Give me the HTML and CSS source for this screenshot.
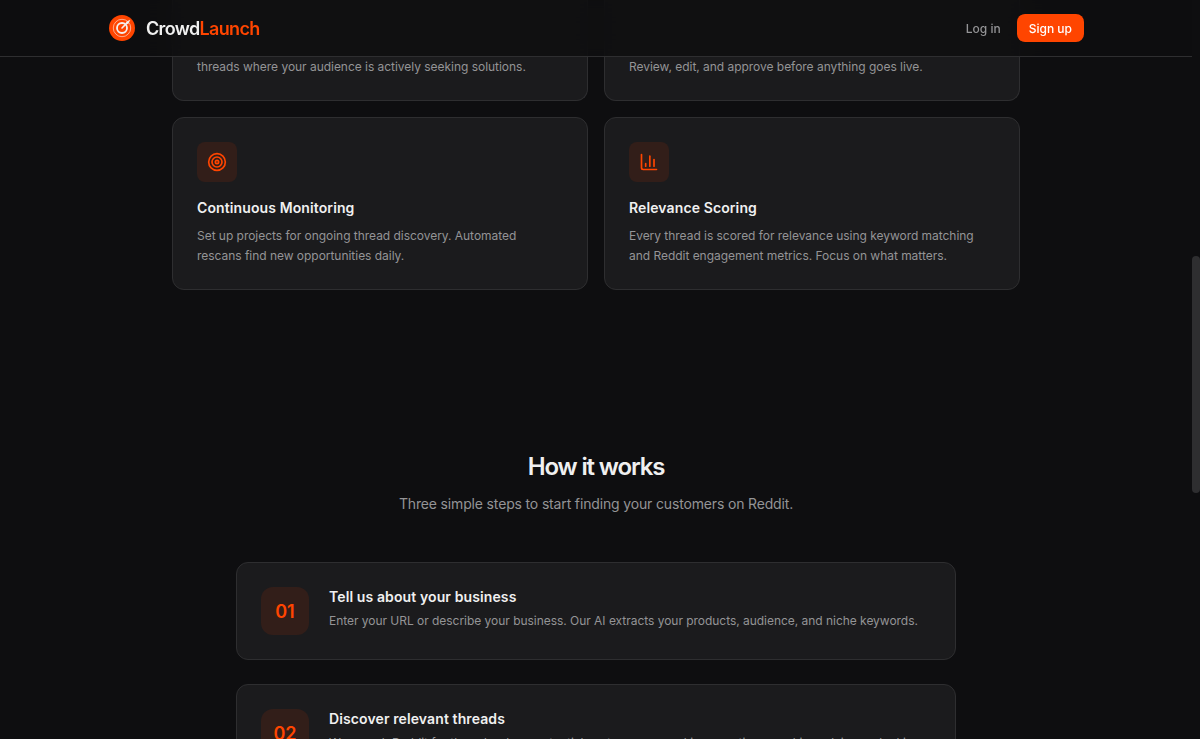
FILE: index.html
```html
<!DOCTYPE html>
<html lang="en">
<head>
  <meta charset="UTF-8">
  <meta name="viewport" content="width=device-width, initial-scale=1.0">
  <title>CrowdLaunch</title>
  <link rel="stylesheet" href="styles.css">
</head>
<body>
  <header class="site-header">
    <div class="nav">
      <a class="brand" href="#">
        <svg class="logo" viewBox="0 0 28 28" fill="none">
          <circle cx="14" cy="14" r="13" fill="#ff4500"/>
          <circle cx="14" cy="14" r="8.7" stroke="#fff" stroke-opacity=".55" stroke-width="1"/>
          <circle cx="14" cy="14" r="5" stroke="#f4f0ee" stroke-width="1.8"/>
          <path d="M14 14l5.5-5.5" stroke="#f4f0ee" stroke-width="1.6" stroke-linecap="round"/>
          <path d="M18 8.3l3.8-2.1-2 3.9z" fill="#f4f0ee" stroke="#f4f0ee" stroke-width=".6"/>
        </svg>
        <span class="brand-name">Crowd<span class="accent">Launch</span></span>
      </a>
      <nav class="nav-links">
        <a class="login" href="#">Log in</a>
        <a class="signup" href="#">Sign up</a>
      </nav>
    </div>
  </header>

  <main class="page">
    <section class="features">
      <div class="card card-cut">
        <p>threads where your audience is actively seeking solutions.</p>
      </div>
      <div class="card card-cut">
        <p>Review, edit, and approve before anything goes live.</p>
      </div>
      <div class="card">
        <div class="icon">
          <svg viewBox="0 0 24 24">
            <circle cx="12" cy="12" r="10"/>
            <circle cx="12" cy="12" r="6"/>
            <circle cx="12" cy="12" r="2"/>
          </svg>
        </div>
        <h3>Continuous Monitoring</h3>
        <p>Set up projects for ongoing thread discovery. Automated<br>rescans find new opportunities daily.</p>
      </div>
      <div class="card">
        <div class="icon">
          <svg viewBox="0 0 24 24">
            <path d="M3 3v16a2 2 0 0 0 2 2h16"/>
            <path d="M18 17V9"/>
            <path d="M13 17V5"/>
            <path d="M8 17v-3"/>
          </svg>
        </div>
        <h3>Relevance Scoring</h3>
        <p>Every thread is scored for relevance using keyword matching<br>and Reddit engagement metrics. Focus on what matters.</p>
      </div>
    </section>

    <section class="steps">
      <h2>How it works</h2>
      <p class="lead">Three simple steps to start finding your customers on Reddit.</p>
      <div class="step">
        <div class="number">01</div>
        <div class="step-text">
          <h3>Tell us about your business</h3>
          <p>Enter your URL or describe your business. Our AI extracts your products, audience, and niche keywords.</p>
        </div>
      </div>
      <div class="step">
        <div class="number">02</div>
        <div class="step-text">
          <h3>Discover relevant threads</h3>
          <p>We search Reddit for threads where potential customers are asking questions, seeking advice, or looking</p>
        </div>
      </div>
    </section>
  </main>
  <div class="scroll-thumb"></div>
</body>
</html>
```

FILE: styles.css
```css
* {
  box-sizing: border-box;
  margin: 0;
  padding: 0;
}

body {
  height: 739px;
  overflow: hidden;
  padding-right: 8px;
  background: #0e0e10;
  color: #f0f0f0;
  font-family: Inter, "Liberation Sans", sans-serif;
}

a {
  color: inherit;
  text-decoration: none;
}

.accent {
  color: #ff4500;
}

/* Header */
.site-header {
  position: fixed;
  top: 0;
  left: 0;
  right: 8px;
  z-index: 1;
  height: 57px;
  background: rgba(14, 14, 15, 0.8);
  backdrop-filter: blur(12px);
  border-bottom: 1px solid #2e2e30;
}

.nav {
  display: flex;
  align-items: center;
  justify-content: space-between;
  max-width: 1024px;
  height: 56px;
  margin: 0 auto;
  padding: 0 24px;
}

.brand {
  display: flex;
  align-items: center;
  gap: 10px;
}

.logo {
  width: 28px;
  height: 28px;
}

.brand-name {
  font-size: 18px;
  font-weight: 620;
  letter-spacing: -0.66px;
}

.nav-links {
  display: flex;
  align-items: center;
  gap: 16px;
  font-size: 12px;
}

.login {
  color: #949496;
  font-weight: 500;
}

.signup {
  height: 28px;
  padding: 0 12px;
  border-radius: 8px;
  background: #ff4500;
  color: #fff;
  font-weight: 500;
  line-height: 29px;
}

/* Feature cards */
.features {
  display: grid;
  grid-template-columns: 1fr 1fr;
  gap: 16px;
  max-width: 896px;
  margin: 0 auto;
  padding: 0 24px;
}

.card {
  height: 173px;
  padding: 24px;
  background: #1b1b1d;
  border: 1px solid #2e2e30;
  border-radius: 12px;
}

.card-cut {
  height: 101px;
  padding-top: 57px;
  border-top: 0;
  border-radius: 0 0 12px 12px;
}

.card p,
.step p {
  color: #949496;
  font-size: 12px;
  line-height: 20px;
  letter-spacing: -0.032px;
}

.icon {
  display: flex;
  align-items: center;
  justify-content: center;
  width: 40px;
  height: 40px;
  margin-bottom: 16px;
  border-radius: 8px;
  background: #321e19;
}

.icon svg {
  width: 20px;
  height: 20px;
  fill: none;
  stroke: #ff4500;
  stroke-width: 2;
  stroke-linecap: round;
  stroke-linejoin: round;
}

h3 {
  font-size: 14px;
  font-weight: 600;
  line-height: 20px;
  letter-spacing: 0.11px;
}

.card h3 {
  margin-bottom: 8px;
}

/* How it works */
.steps {
  max-width: 768px;
  margin: 0 auto;
  padding: 161px 24px 0;
}

h2 {
  margin-bottom: 11px;
  font-size: 24px;
  font-weight: 620;
  line-height: 32px;
  letter-spacing: -1.15px;
  text-align: center;
}

.lead {
  margin-bottom: 48px;
  color: #949496;
  font-size: 14px;
  line-height: 20px;
  letter-spacing: -0.155px;
  text-align: center;
}

.step {
  display: flex;
  gap: 20px;
  height: 98px;
  margin-bottom: 24px;
  padding: 24px;
  background: #1b1b1d;
  border: 1px solid #2e2e30;
  border-radius: 12px;
}

.number {
  width: 48px;
  height: 48px;
  flex-shrink: 0;
  border-radius: 12px;
  background: #321e19;
  color: #ff4500;
  font-size: 18px;
  font-weight: 600;
  line-height: 50px;
  text-align: center;
}

.step h3 {
  margin-bottom: 4px;
}

.step p {
  white-space: nowrap;
}

.scroll-thumb {
  position: fixed;
  top: 256px;
  right: 0;
  width: 8px;
  height: 237px;
  border-radius: 4px;
  background: #2e2e30;
}
```
